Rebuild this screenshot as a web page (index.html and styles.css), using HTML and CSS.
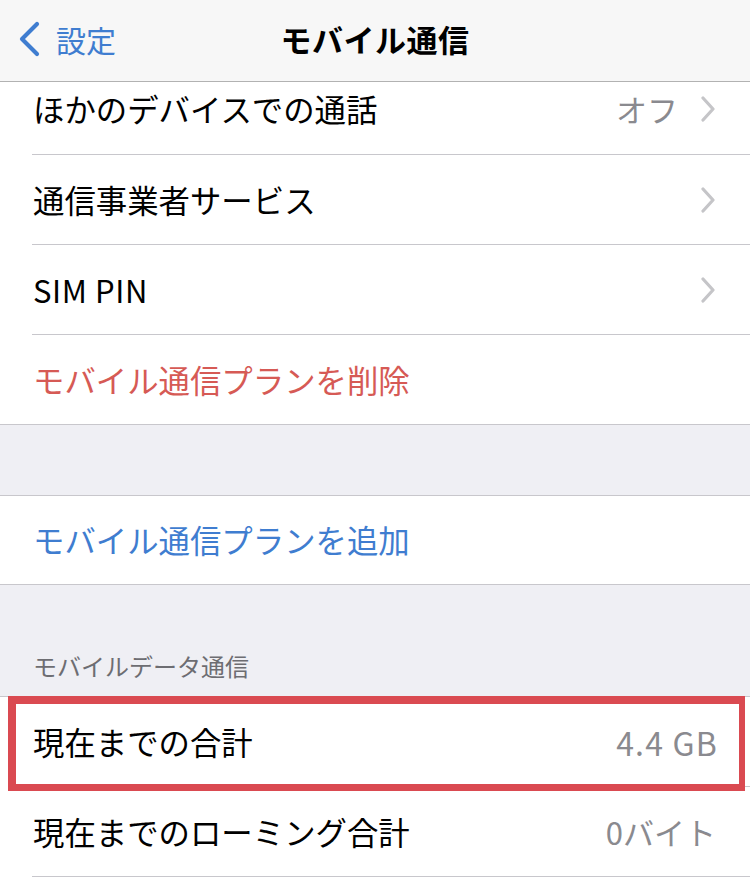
FILE: index.html
```html
<!DOCTYPE html>
<html lang="ja">
<head>
<meta charset="utf-8">
<link rel="stylesheet" href="styles.css">
</head>
<body>
<div class="screen">
  <header class="nav">
    <div class="back">
      <svg class="back-chev" width="24" height="36" viewBox="0 0 24 36"><polyline points="20,3 5,18 20,33" fill="none" stroke="#3f7dd0" stroke-width="4.2" stroke-linecap="round" stroke-linejoin="round"/></svg>
      <span class="back-text">設定</span>
    </div>
    <div class="title">モバイル通信</div>
  </header>

  <section class="group">
    <div class="row first">
      <div class="cell">
        <span class="label">ほかのデバイスでの通話</span>
        <span class="value">オフ</span>
        <svg class="chev" width="16" height="26" viewBox="0 0 16 26"><polyline points="3,2 13,13 3,24" fill="none" stroke="#c5c5c8" stroke-width="3.2" stroke-linecap="round" stroke-linejoin="round"/></svg>
      </div>
    </div>
    <div class="row">
      <div class="cell">
        <span class="label">通信事業者サービス</span>
        <svg class="chev" width="16" height="26" viewBox="0 0 16 26"><polyline points="3,2 13,13 3,24" fill="none" stroke="#c5c5c8" stroke-width="3.2" stroke-linecap="round" stroke-linejoin="round"/></svg>
      </div>
    </div>
    <div class="row">
      <div class="cell">
        <span class="label latin">SIM PIN</span>
        <svg class="chev" width="16" height="26" viewBox="0 0 16 26"><polyline points="3,2 13,13 3,24" fill="none" stroke="#c5c5c8" stroke-width="3.2" stroke-linecap="round" stroke-linejoin="round"/></svg>
      </div>
    </div>
    <div class="row last">
      <div class="cell">
        <span class="label red">モバイル通信プランを削除</span>
      </div>
    </div>
  </section>

  <div class="gap"></div>

  <section class="group">
    <div class="row last short">
      <div class="cell">
        <span class="label blue">モバイル通信プランを追加</span>
      </div>
    </div>
  </section>

  <div class="section-head">モバイルデータ通信</div>

  <section class="group open">
    <div class="row highlight">
      <div class="cell">
        <span class="label">現在までの合計</span>
        <span class="value end latin">4.4 GB</span>
      </div>
      <div class="mark"></div>
    </div>
    <div class="row">
      <div class="cell">
        <span class="label">現在までのローミング合計</span>
        <span class="value end">0バイト</span>
      </div>
    </div>
  </section>
</div>
</body>
</html>
```

FILE: styles.css
```css
html, body {
  margin: 0;
  padding: 0;
  background: #ffffff;
}

.screen {
  width: 750px;
  height: 881px;
  overflow: hidden;
  font-family: "Noto Sans CJK JP", "Noto Sans", sans-serif;
  color: #000000;
  background: #ffffff;
}

.nav {
  height: 81px;
  background: #f7f7f7;
  border-bottom: 1px solid #b2b2b2;
  display: flex;
  align-items: center;
  justify-content: center;
  position: relative;
}

.back {
  position: absolute;
  left: 17px;
  top: 21px;
  display: flex;
  align-items: center;
  gap: 15px;
}

.back-chev {
  display: block;
}

.back-text {
  font-size: 30px;
  color: #3f7dd0;
  line-height: 36px;
}

.title {
  font-size: 31px;
  font-weight: 700;
  letter-spacing: 0.5px;
  line-height: 36px;
  margin-top: -4px;
}

.group {
  background: #ffffff;
  border-bottom: 1px solid #c8c7cc;
}

.row {
  padding-left: 32px;
  height: 90px;
  box-sizing: border-box;
}

.cell {
  height: 100%;
  box-sizing: border-box;
  border-bottom: 1px solid #c8c7cc;
  display: flex;
  align-items: center;
  padding-right: 34px;
  padding-left: 1px;
}

.row.first {
  height: 73px;
}

.row.first .cell {
  padding-bottom: 19px;
}

.row.last {
  height: 89px;
}

.row.last.short {
  height: 88px;
}

.row.last .cell {
  border-bottom: none;
}

.label {
  font-size: 31.4px;
  line-height: 40px;
  flex: 1;
  white-space: nowrap;
}

.label.latin {
  font-size: 31px;
  letter-spacing: 0.6px;
}

.label.red {
  color: #d65a55;
}

.label.blue {
  color: #3f7dd0;
}

.value {
  font-size: 31px;
  color: #8a8a8f;
  line-height: 40px;
  margin-right: 22px;
  white-space: nowrap;
}

.value.end {
  margin-right: 0;
}

.value.latin {
  font-size: 32px;
  letter-spacing: 1.2px;
  margin-right: -1px;
}

.chev {
  display: block;
  margin-top: 1px;
}

.gap {
  height: 70px;
  background: #efeff4;
  border-bottom: 1px solid #c8c7cc;
}

.section-head {
  height: 112px;
  background: #efeff4;
  border-bottom: 1px solid #c8c7cc;
  box-sizing: border-box;
  padding-left: 33px;
  padding-top: 64px;
  font-size: 24px;
  line-height: 34px;
  color: #6d6d72;
}

.group.open {
  border-bottom: none;
}

.row.highlight {
  position: relative;
}

.row.highlight .cell {
  padding-right: 33px;
}

.mark {
  position: absolute;
  left: 8px;
  top: -1px;
  width: 737px;
  height: 95px;
  box-sizing: border-box;
  border: 8px solid #da4a51;
  border-right-width: 6px;
  border-bottom-width: 7px;
}
```
